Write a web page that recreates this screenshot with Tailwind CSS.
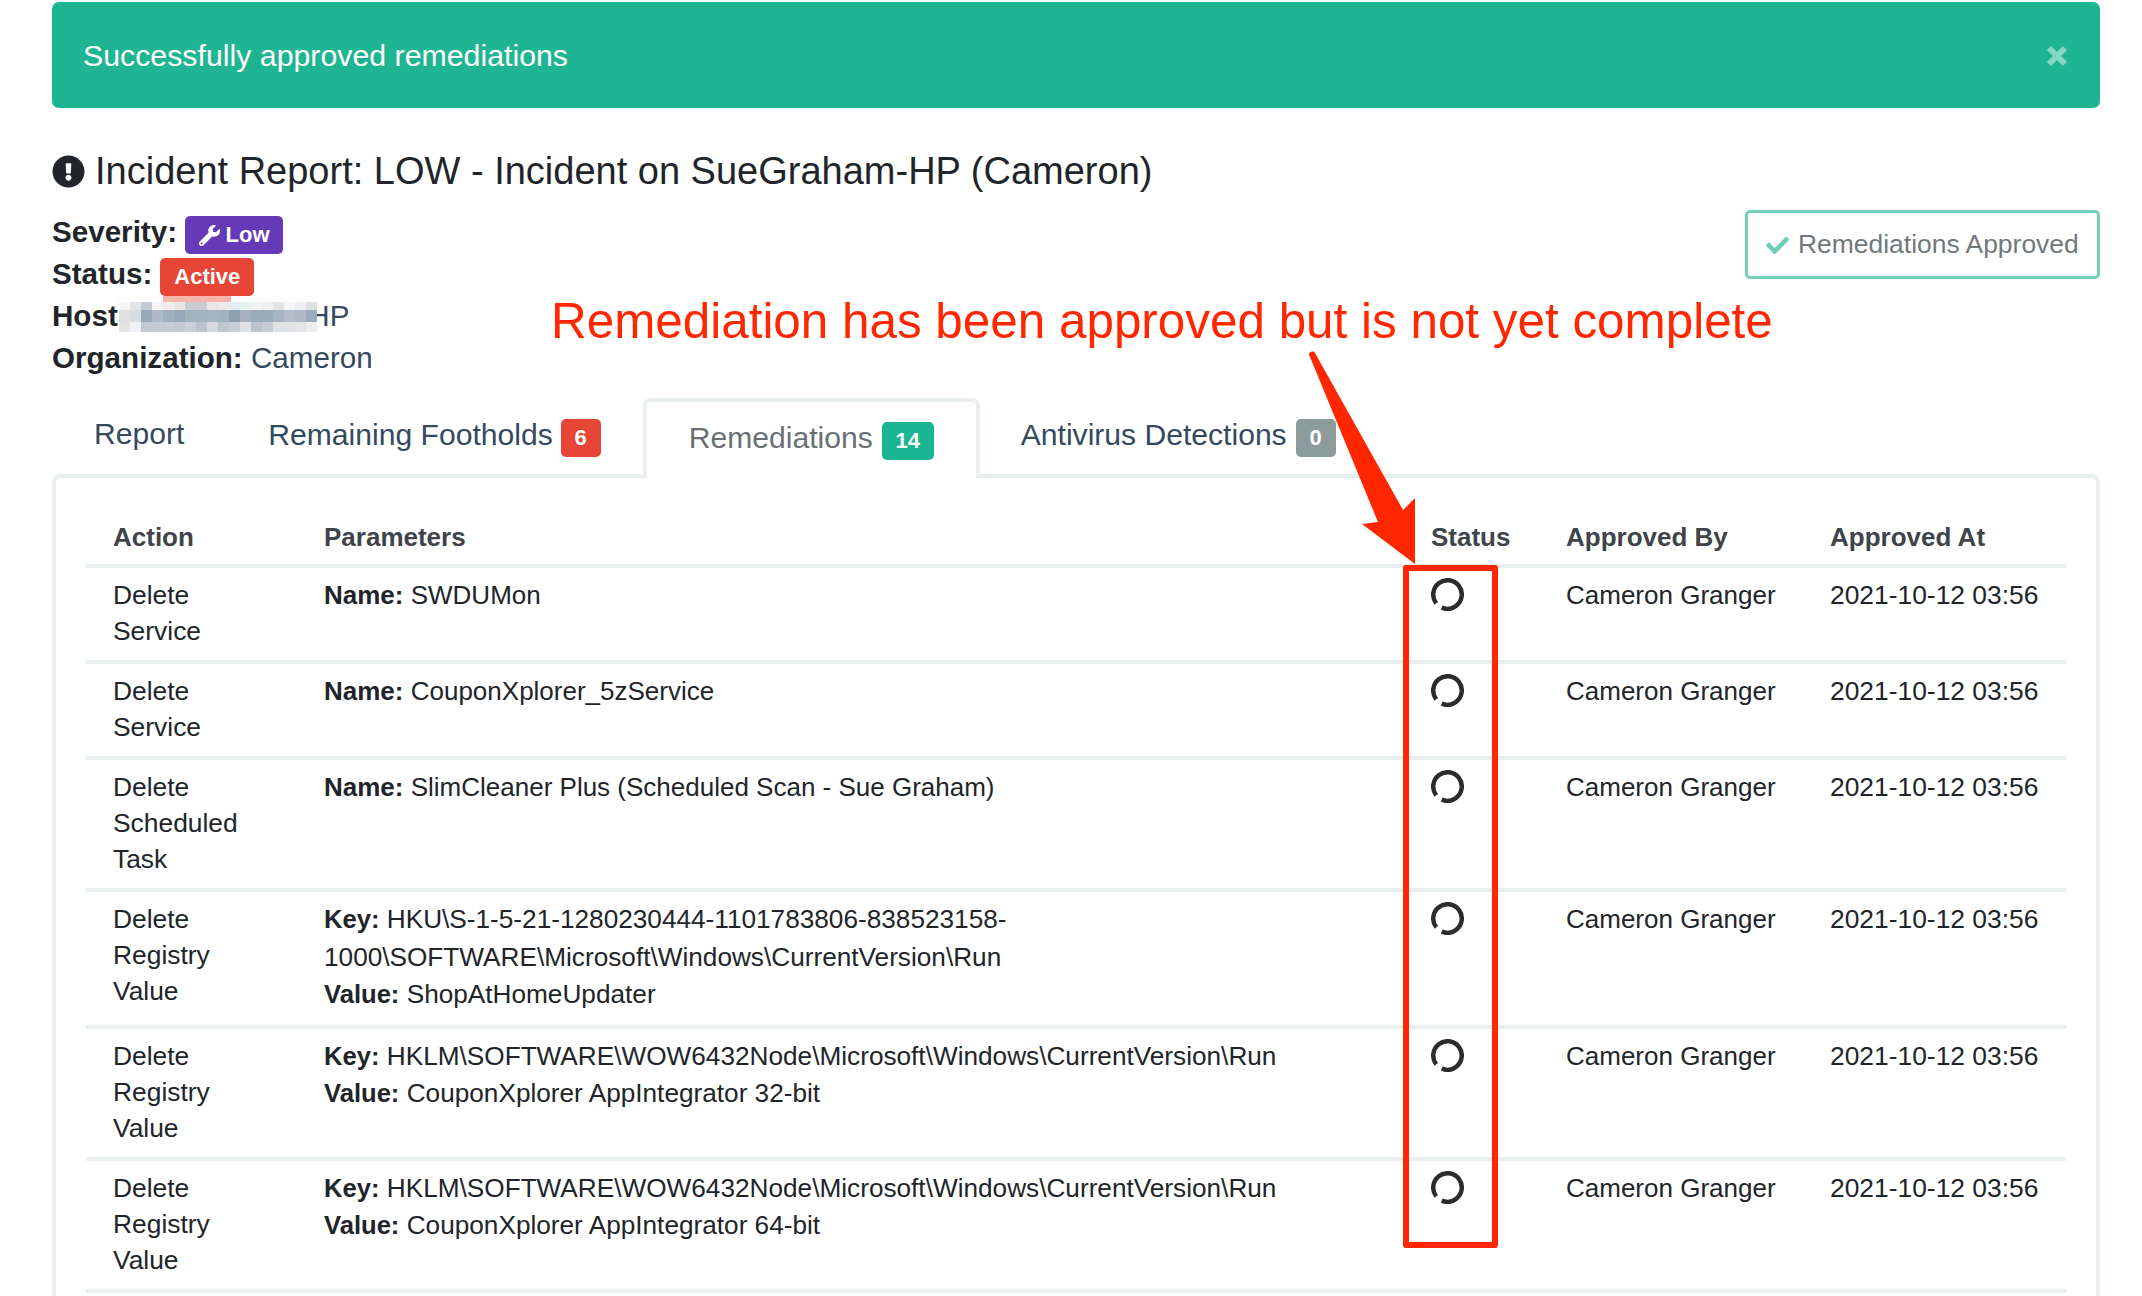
<!DOCTYPE html>
<html lang="en">
<head>
  <meta charset="UTF-8">
  <title>Incident Report</title>
  <script src="https://cdn.jsdelivr.net/npm/@tailwindcss/browser@4"></script>
</head>
<body class="relative h-[1296px] overflow-hidden bg-white font-['Liberation_Sans',Arial,sans-serif] text-[#212529]">
  <div class="ml-[52px] w-[2048px] pt-[2px]">

    <!-- alert -->
    <div class="flex h-[106px] items-center justify-between rounded-[7px] bg-[#1fb492] pl-[31px] pr-[32px] pt-[2px] text-[30.3px] text-white">
      <span>Successfully approved remediations</span>
      <svg class="h-[22px] w-[22px]" viewBox="0 0 22 22"><path d="M3 3L19 19M19 3L3 19" stroke="#86d7c4" stroke-width="6"/></svg>
    </div>

    <!-- title -->
    <h1 class="mt-[44px] flex h-[38px] items-center gap-[10px] text-[38px] font-normal">
      <svg class="h-[33px] w-[33px]" viewBox="0 0 512 512"><path fill="#212529" d="M504 256c0 136.997-111.043 248-248 248S8 392.997 8 256C8 119.083 119.043 8 256 8s248 111.083 248 248zm-248 50c-25.405 0-46 20.595-46 46s20.595 46 46 46 46-20.595 46-46-20.595-46-46-46zm-43.673-165.346l7.418 136c.347 6.364 5.609 11.346 11.982 11.346h48.546c6.373 0 11.635-4.982 11.982-11.346l7.418-136c.375-6.874-5.098-12.654-11.982-12.654h-63.383c-6.884 0-12.356 5.78-11.981 12.654z"/></svg>
      <span>Incident Report: LOW - Incident on SueGraham-HP (Cameron)</span>
    </h1>

    <!-- meta -->
    <div class="mt-[20px] flex items-start justify-between">
      <div class="pt-[1px] text-[29.6px] leading-[42px]">
        <div class="flex h-[42px] items-start gap-[8px]">
          <b>Severity:</b>
          <span class="mt-[5px] flex h-[38px] w-[98px] items-center justify-center gap-[6px] rounded-[5px] bg-[#6639b6] text-[22px] leading-none font-bold text-white">
            <svg class="h-[21px] w-[21px]" viewBox="0 0 512 512"><path fill="#fff" d="M507.73 109.1c-2.24-9.03-13.54-12.09-20.12-5.51l-74.36 74.36-67.88-11.31-11.31-67.88 74.36-74.36c6.62-6.62 3.43-17.9-5.66-20.16-47.38-11.74-99.55.91-136.58 37.93-39.64 39.64-50.55 97.1-34.05 147.2L18.74 402.76c-24.99 24.99-24.99 65.51 0 90.5 24.99 24.99 65.51 24.99 90.5 0l213.21-213.21c50.12 16.71 107.47 5.68 147.37-34.22 37.07-37.07 49.7-89.32 37.91-136.73zM64 472c-13.25 0-24-10.75-24-24 0-13.26 10.75-24 24-24s24 10.74 24 24c0 13.25-10.75 24-24 24z"/></svg>
            Low
          </span>
        </div>
        <div class="flex h-[42px] items-start gap-[8px]">
          <b>Status:</b>
          <span class="mt-[5px] flex h-[38px] w-[94px] items-center justify-center rounded-[5px] bg-[#e74535] text-[22px] leading-none font-bold text-white">Active</span>
        </div>
        <div class="h-[42px]"><b>Host:</b> <span class="ml-[3px] text-[#34495e]">SueGraham-HP</span></div>
        <div class="h-[42px]"><b>Organization:</b> <span class="text-[#34495e]">Cameron</span></div>
      </div>
      <div class="flex h-[69px] w-[355px] items-center gap-[9px] rounded-[5px] border-[3.5px] border-[#76cfb8] pl-[18px] pt-[1px] text-[26.45px] text-[#70787e]">
        <svg class="h-[23px] w-[23px]" viewBox="0 0 512 512"><path fill="#6fcdb6" d="M173.898 439.404l-166.4-166.4c-9.997-9.997-9.997-26.206 0-36.204l36.203-36.204c9.997-10 26.207-10 36.204 0L192 312.69 432.095 72.596c9.997-9.997 26.207-9.997 36.204 0l36.203 36.204c9.997 9.997 9.997 26.206 0 36.204l-294.4 294.401c-9.998 9.997-26.207 9.997-36.204-.001z"/></svg>
        Remediations Approved
      </div>
    </div>

    <!-- tabs -->
    <div class="relative z-10 mt-[19px] flex h-[80px] items-start text-[30.1px] leading-[42px] text-[#34495e]">
      <a class="flex px-[42px] pt-[15px]">Report</a>
      <a class="flex items-center gap-[8px] px-[42px] pt-[15px]">Remaining Footholds
        <span class="mt-[6px] flex h-[38px] w-[40px] items-center justify-center rounded-[5px] bg-[#e74535] text-[22px] leading-none font-bold text-white">6</span>
      </a>
      <a class="flex h-[80px] items-start rounded-t-[8px] border-x-4 border-t-4 border-[#e9efee] bg-white px-[42px] pt-[14px] text-[#696f75]">
        <span class="flex items-center gap-[9px]">Remediations
          <span class="mt-[6px] flex h-[38px] w-[52px] items-center justify-center rounded-[5px] bg-[#1ab591] text-[22px] leading-none font-bold text-white">14</span>
        </span>
      </a>
      <a class="flex items-center gap-[9px] pl-[41px] pr-[42px] pt-[15px]">Antivirus Detections
        <span class="mt-[6px] flex h-[38px] w-[40px] items-center justify-center rounded-[5px] bg-[#8a9b9a] text-[22px] leading-none font-bold text-white">0</span>
      </a>
    </div>

    <!-- panel -->
    <div class="-mt-[4px] rounded-[8px] border-4 border-[#e9efee] px-[30px] pt-[29px] pb-[40px]">
      <table class="w-[1980px] table-fixed border-separate border-spacing-0 text-[26.4px] leading-[36px] [&_td]:border-t-4 [&_td]:border-[#e9efee] [&_td]:pt-[9px] [&_td]:pb-[11px] [&_td]:pl-[27px] [&_td]:pr-[27px] [&_td]:align-top [&_th]:pb-[9px] [&_th]:pl-[27px] [&_th]:pr-[27px] [&_th]:pt-[12px] [&_th]:text-left [&_th]:text-[26px] [&_th]:font-bold [&_th]:text-[#3f444a]">
        <colgroup>
          <col class="w-[211px]"><col class="w-[1107px]"><col class="w-[135px]"><col class="w-[264px]"><col class="w-[263px]">
        </colgroup>
        <thead>
          <tr><th>Action</th><th>Parameters</th><th>Status</th><th class="whitespace-nowrap [&]:text-[25.6px]">Approved By</th><th class="whitespace-nowrap [&]:text-[25.6px]">Approved At</th></tr>
        </thead>
        <tbody>
          <tr>
            <td>Delete Service</td>
            <td class="text-[26px] leading-[37.5px] [&]:pt-[13px] [&]:pb-[6.5px]"><b>Name:</b> SWDUMon</td>
            <td><svg class="mt-[1px] h-[33px] w-[33px]" viewBox="0 0 33 33"><circle cx="16.5" cy="16.5" r="14.25" fill="none" stroke="#2a2c2e" stroke-width="4.5" stroke-dasharray="82 7.5" transform="rotate(142 16.5 16.5)"/></svg></td>
            <td class="whitespace-nowrap text-[26px]">Cameron Granger</td>
            <td class="whitespace-nowrap">2021-10-12 03:56</td>
          </tr>
          <tr>
            <td>Delete Service</td>
            <td class="text-[26px] leading-[37.5px] [&]:pt-[13px] [&]:pb-[6.5px]"><b>Name:</b> CouponXplorer_5zService</td>
            <td><svg class="mt-[1px] h-[33px] w-[33px]" viewBox="0 0 33 33"><circle cx="16.5" cy="16.5" r="14.25" fill="none" stroke="#2a2c2e" stroke-width="4.5" stroke-dasharray="82 7.5" transform="rotate(142 16.5 16.5)"/></svg></td>
            <td class="whitespace-nowrap text-[26px]">Cameron Granger</td>
            <td class="whitespace-nowrap">2021-10-12 03:56</td>
          </tr>
          <tr>
            <td>Delete Scheduled Task</td>
            <td class="text-[26px] leading-[37.5px] [&]:pt-[13px] [&]:pb-[6.5px]"><b>Name:</b> SlimCleaner Plus (Scheduled Scan - Sue Graham)</td>
            <td><svg class="mt-[1px] h-[33px] w-[33px]" viewBox="0 0 33 33"><circle cx="16.5" cy="16.5" r="14.25" fill="none" stroke="#2a2c2e" stroke-width="4.5" stroke-dasharray="82 7.5" transform="rotate(142 16.5 16.5)"/></svg></td>
            <td class="whitespace-nowrap text-[26px]">Cameron Granger</td>
            <td class="whitespace-nowrap">2021-10-12 03:56</td>
          </tr>
          <tr>
            <td>Delete Registry Value</td>
            <td class="text-[26.2px] leading-[37.5px] [&]:pt-[12px] [&]:pb-[6.5px] [&_b]:text-[25.6px]"><b>Key:</b> HKU\S-1-5-21-1280230444-1101783806-838523158-1000\SOFTWARE\Microsoft\Windows\CurrentVersion\Run<br><b>Value:</b> ShopAtHomeUpdater</td>
            <td><svg class="mt-[1px] h-[33px] w-[33px]" viewBox="0 0 33 33"><circle cx="16.5" cy="16.5" r="14.25" fill="none" stroke="#2a2c2e" stroke-width="4.5" stroke-dasharray="82 7.5" transform="rotate(142 16.5 16.5)"/></svg></td>
            <td class="whitespace-nowrap text-[26px]">Cameron Granger</td>
            <td class="whitespace-nowrap">2021-10-12 03:56</td>
          </tr>
          <tr>
            <td>Delete Registry Value</td>
            <td class="text-[26.2px] leading-[37.5px] [&]:pt-[14px] [&]:pb-[5px] [&_b]:text-[25.6px]"><b>Key:</b> HKLM\SOFTWARE\WOW6432Node\Microsoft\Windows\CurrentVersion\Run<br><b>Value:</b> CouponXplorer AppIntegrator 32-bit</td>
            <td><svg class="mt-[1px] h-[33px] w-[33px]" viewBox="0 0 33 33"><circle cx="16.5" cy="16.5" r="14.25" fill="none" stroke="#2a2c2e" stroke-width="4.5" stroke-dasharray="82 7.5" transform="rotate(142 16.5 16.5)"/></svg></td>
            <td class="whitespace-nowrap text-[26px]">Cameron Granger</td>
            <td class="whitespace-nowrap">2021-10-12 03:56</td>
          </tr>
          <tr>
            <td>Delete Registry Value</td>
            <td class="text-[26.2px] leading-[37.5px] [&]:pt-[14px] [&]:pb-[5px] [&_b]:text-[25.6px]"><b>Key:</b> HKLM\SOFTWARE\WOW6432Node\Microsoft\Windows\CurrentVersion\Run<br><b>Value:</b> CouponXplorer AppIntegrator 64-bit</td>
            <td><svg class="mt-[1px] h-[33px] w-[33px]" viewBox="0 0 33 33"><circle cx="16.5" cy="16.5" r="14.25" fill="none" stroke="#2a2c2e" stroke-width="4.5" stroke-dasharray="82 7.5" transform="rotate(142 16.5 16.5)"/></svg></td>
            <td class="whitespace-nowrap text-[26px]">Cameron Granger</td>
            <td class="whitespace-nowrap">2021-10-12 03:56</td>
          </tr>
          <tr>
            <td>&nbsp;</td><td></td><td></td><td></td><td></td>
          </tr>
        </tbody>
      </table>
    </div>
  </div>

  <!-- pixelated hostname redaction, lies over the text -->
  <svg class="absolute left-[119px] top-[296px] h-[36px] w-[198px]" viewBox="0 0 198 36" shape-rendering="crispEdges">
    <rect x="0" y="0" width="198" height="6" fill="#fdfdfd"/>
    <rect x="44" y="0" width="68" height="6" fill="#f6b3aa"/>
    <g transform="translate(0 6)">
      <rect x="0" width="11" height="8" fill="#f5f5f3"/><rect x="11" width="11" height="8" fill="#e2e5ea"/><rect x="22" width="11" height="8" fill="#c2cad4"/><rect x="33" width="11" height="8" fill="#f2f4f6"/><rect x="44" width="11" height="8" fill="#f4ebea"/><rect x="55" width="11" height="8" fill="#ebe6e6"/><rect x="66" width="11" height="8" fill="#c9ccd3"/><rect x="77" width="11" height="8" fill="#c8ccd3"/><rect x="88" width="11" height="8" fill="#ebe5e7"/><rect x="99" width="11" height="8" fill="#eee9ee"/><rect x="110" width="11" height="8" fill="#e3edf3"/><rect x="121" width="11" height="8" fill="#e5f3f5"/><rect x="132" width="11" height="8" fill="#f1f4f6"/><rect x="143" width="11" height="8" fill="#edf0f2"/><rect x="154" width="11" height="8" fill="#e1e5e9"/><rect x="165" width="11" height="8" fill="#f5f7f6"/><rect x="176" width="11" height="8" fill="#eceef1"/><rect x="187" width="11" height="8" fill="#dbe3e7"/>
    </g>
    <g transform="translate(0 14)">
      <rect x="0" width="11" height="12" fill="#e0e0de"/><rect x="11" width="11" height="12" fill="#d7dde5"/><rect x="22" width="11" height="12" fill="#9aaab9"/><rect x="33" width="11" height="12" fill="#b0b9c6"/><rect x="44" width="11" height="12" fill="#a2afbc"/><rect x="55" width="11" height="12" fill="#97a8ba"/><rect x="66" width="11" height="12" fill="#a4b2c0"/><rect x="77" width="11" height="12" fill="#a3b2bf"/><rect x="88" width="11" height="12" fill="#a5b5c0"/><rect x="99" width="11" height="12" fill="#a2b2bf"/><rect x="110" width="11" height="12" fill="#8f9ead"/><rect x="121" width="11" height="12" fill="#a9b0bd"/><rect x="132" width="11" height="12" fill="#9cabb9"/><rect x="143" width="11" height="12" fill="#9dacba"/><rect x="154" width="11" height="12" fill="#a6b4c1"/><rect x="165" width="11" height="12" fill="#b4bdc9"/><rect x="176" width="11" height="12" fill="#b1b9c4"/><rect x="187" width="11" height="12" fill="#9cabba"/>
    </g>
    <g transform="translate(0 26)">
      <rect x="0" width="11" height="10" fill="#e3e3e3"/><rect x="11" width="11" height="10" fill="#eff1f4"/><rect x="22" width="11" height="10" fill="#c0c9d2"/><rect x="33" width="11" height="10" fill="#c5ccd5"/><rect x="44" width="11" height="10" fill="#c3cbd4"/><rect x="55" width="11" height="10" fill="#c2c9d3"/><rect x="66" width="11" height="10" fill="#c9ced8"/><rect x="77" width="11" height="10" fill="#bac3cf"/><rect x="88" width="11" height="10" fill="#d6d9e0"/><rect x="99" width="11" height="10" fill="#bfc7ce"/><rect x="110" width="11" height="10" fill="#c8ced6"/><rect x="121" width="11" height="10" fill="#dee1e5"/><rect x="132" width="11" height="10" fill="#bcc3cf"/><rect x="143" width="11" height="10" fill="#c7ccd5"/><rect x="154" width="11" height="10" fill="#dfe2e6"/><rect x="165" width="11" height="10" fill="#e0e3e6"/><rect x="176" width="11" height="10" fill="#e3e5e8"/><rect x="187" width="11" height="10" fill="#eceef0"/>
    </g>
  </svg>

  <!-- annotation drawn on top of the screenshot -->
  <div class="absolute left-[551px] top-[292px] z-20 whitespace-nowrap text-[49.4px] leading-[58px] text-[#ff2600]">Remediation has been approved but is not yet complete</div>
  <svg class="absolute left-[1300px] top-[340px] z-20 h-[240px] w-[140px]" viewBox="0 0 140 240">
    <path fill="#ff2600" d="M9 14.5C9 11.5 13.5 10.5 15 13L103 170L115 158L115 224L62 184L78 182L9 14.5Z"/>
  </svg>
  <div class="absolute left-[1403px] top-[565px] z-20 h-[683px] w-[95px] rounded-[3px] border-[6px] border-[#ff2600]"></div>
</body>
</html>
